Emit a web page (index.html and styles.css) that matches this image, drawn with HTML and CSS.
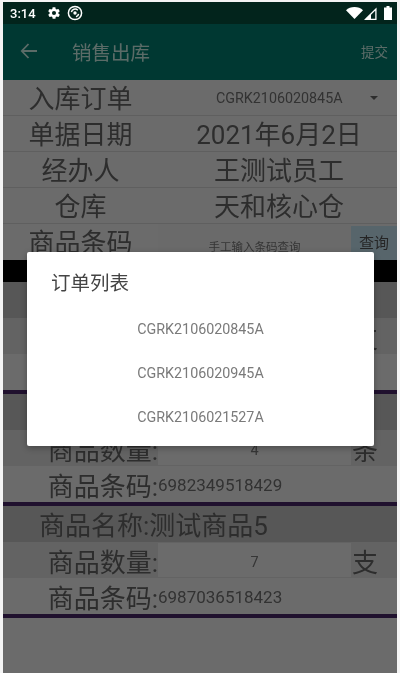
FILE: index.html
```html
<!DOCTYPE html>
<html>

<head>
    <title>销售出库</title>
    <link rel="stylesheet" href="styles.css">
</head>

<body>
    <div class="screen">
        <div class="status-bar">
            <span class="clock">3:14</span>
            <svg class="status-icon" width="14" height="14" viewBox="0 0 24 24">
                <path fill="#fff" fill-rule="evenodd" d="M19.4 13c.04-.32.1-.66.1-1s-.06-.68-.1-1l2.1-1.6c.2-.15.25-.42.12-.64l-2-3.46c-.12-.22-.38-.3-.6-.22l-2.5 1c-.52-.4-1.08-.73-1.7-.98l-.37-2.65A.5.5 0 0 0 14 2h-4a.5.5 0 0 0-.5.42l-.37 2.65c-.62.25-1.18.58-1.7.98l-2.5-1c-.22-.08-.48 0-.6.22l-2 3.46c-.13.22-.07.49.12.64L4.6 11c-.04.32-.1.66-.1 1s.06.68.1 1l-2.1 1.6c-.2.15-.25.42-.12.64l2 3.46c.12.22.38.3.6.22l2.5-1c.52.4 1.08.73 1.7.98l.37 2.65c.04.24.25.42.5.42h4c.25 0 .46-.18.5-.42l.37-2.65c.62-.25 1.18-.58 1.7-.98l2.5 1c.22.08.48 0 .6-.22l2-3.46c.13-.22.07-.49-.12-.64zM12 15.5a3.5 3.5 0 1 1 0-7 3.5 3.5 0 0 1 0 7z" />
            </svg>
            <svg class="status-icon sync" width="16" height="16" viewBox="0 0 16 16">
                <circle cx="8" cy="8" r="6.6" fill="none" stroke="#fff" stroke-width="1.5" />
                <path fill="none" stroke="#fff" stroke-width="1.5" d="M4.4 7.2a3.8 3.8 0 0 1 6.4-2M11.6 8.8a3.8 3.8 0 0 1-2.6 3" />
                <circle cx="8" cy="8" r="1.7" fill="#fff" />
            </svg>
            <span class="status-right">
                <svg width="17" height="12" viewBox="0 0 17 12">
                    <path fill="#fff" d="M0 3.2C2.2 1.2 5.2 0 8.5 0s6.3 1.2 8.5 3.2L8.5 12z" />
                </svg>
                <svg width="13" height="13" viewBox="0 0 13 13">
                    <path fill="none" stroke="#fff" stroke-width="1.3" d="M1.6 12.3 11.9 2v10.3z" />
                    <path fill="#fff" d="M1 13 7 7v6z" />
                </svg>
                <svg class="battery" width="8" height="14" viewBox="0 0 8 14">
                    <path fill="#fff" d="M2.5 0h3v1.5H8V14H0V1.5h2.5z" />
                </svg>
            </span>
        </div>

        <div class="app">
            <div class="toolbar">
                <svg class="back" width="18" height="16" viewBox="0 0 18 16">
                    <path fill="none" stroke="#d8fff5" stroke-width="1.8" d="M17 8H2M8.5 1 1.8 8l6.7 7" />
                </svg>
                <span class="toolbar-title">销售出库</span>
                <span class="toolbar-action">提交</span>
            </div>

            <div class="form-row">
                <div class="form-label">入库订单</div>
                <div class="spinner">
                    <span class="spinner-text">CGRK2106020845A</span>
                    <span class="spinner-arrow"></span>
                </div>
            </div>
            <div class="form-row">
                <div class="form-label">单据日期</div>
                <div class="form-value">2021年6月2日</div>
            </div>
            <div class="form-row">
                <div class="form-label">经办人</div>
                <div class="form-value">王测试员工</div>
            </div>
            <div class="form-row">
                <div class="form-label">仓库</div>
                <div class="form-value">天和核心仓</div>
            </div>
            <div class="form-row search-row">
                <div class="form-label">商品条码</div>
                <div class="search-input">手工输入条码查询</div>
                <div class="search-btn">查询</div>
            </div>

            <div class="black-bar"></div>

            <div class="item">
                <div class="item-name"></div>
                <div class="item-row qty-row">
                    <div class="item-label"></div>
                    <div class="qty"></div>
                    <div class="unit">支</div>
                </div>
                <div class="item-row"></div>
            </div>
            <div class="item">
                <div class="item-name"></div>
                <div class="item-row qty-row">
                    <div class="item-label">商品数量:</div>
                    <div class="qty">4</div>
                    <div class="unit">条</div>
                </div>
                <div class="item-row">
                    <div class="item-label">商品条码:</div>
                    <div class="barcode">6982349518429</div>
                </div>
            </div>
            <div class="item">
                <div class="item-name">商品名称:测试商品5</div>
                <div class="item-row qty-row">
                    <div class="item-label">商品数量:</div>
                    <div class="qty">7</div>
                    <div class="unit">支</div>
                </div>
                <div class="item-row">
                    <div class="item-label">商品条码:</div>
                    <div class="barcode">6987036518423</div>
                </div>
            </div>

            <div class="scrim"></div>

            <div class="dialog">
                <div class="dialog-title">订单列表</div>
                <div class="dialog-item">CGRK2106020845A</div>
                <div class="dialog-item">CGRK2106020945A</div>
                <div class="dialog-item">CGRK2106021527A</div>
            </div>
        </div>
    </div>
</body>

</html>
```

FILE: styles.css
```css
* {
    box-sizing: border-box;
}

html,
body {
    height: 100%;
}

body {
    margin: 0;
    padding: 2px 3px 0;
    background: #f4f4f4;
    font-family: Roboto, "Noto Sans CJK SC", sans-serif;
    color: #6c6c6c;
    overflow: hidden;
}

/* the reference is a soft video frame */
.screen {
    height: 100%;
    display: flex;
    flex-direction: column;
    background: #fff;
    filter: blur(0.5px);
}

.status-bar {
    height: 22px;
    flex-shrink: 0;
    display: flex;
    align-items: center;
    padding: 0 5px 0 7px;
    background: #02241c;
    color: #fff;
}

.clock {
    font-size: 13px;
    font-weight: 500;
    margin-right: 11px;
}

.status-icon {
    margin-right: 7px;
}

.sync {
    margin-left: -1px;
}

.status-right {
    margin-left: auto;
    display: flex;
    align-items: center;
    gap: 1px;
}

.battery {
    margin-left: 6px;
}

.app {
    position: relative;
    flex: 1;
    overflow: hidden;
}

.toolbar {
    height: 56px;
    display: flex;
    align-items: center;
    padding: 0 9px 2px 17px;
    background: #008577;
    color: #d8fff5;
}

.back {
    margin-right: 34px;
}

.toolbar-title {
    font-size: 19.5px;
}

.toolbar-action {
    margin-left: auto;
    font-size: 13.5px;
}

.form-row {
    height: 36px;
    display: flex;
    align-items: center;
    padding-bottom: 3px;
    border-bottom: 1px solid #e2e2e2;
    font-size: 26px;
    white-space: nowrap;
}

.form-label {
    width: 155px;
    text-align: center;
}

.form-value {
    flex: 1;
    text-align: center;
    padding-left: 3px;
}

.spinner {
    flex: 1;
    display: flex;
    align-items: center;
    padding: 3px 0 0 58px;
}

.spinner-text {
    font-size: 14.3px;
    color: #787878;
}

.spinner-arrow {
    margin-left: 27px;
    border-left: 4px solid transparent;
    border-right: 4px solid transparent;
    border-top: 4px solid #6c6c6c;
}

.search-row {
    padding-bottom: 0;
    border-bottom: 0;
    align-items: stretch;
}

.search-row .form-label {
    line-height: 38px;
}

.search-input {
    flex: 1;
    padding-top: 5px;
    text-align: center;
    font-size: 11.5px;
    line-height: 36px;
    color: #7e7e7e;
    background: #fdfdfd;
}

.search-btn {
    width: 46px;
    margin-top: 2px;
    background: #d0f0ff;
    color: #5a5a5a;
    font-size: 15px;
    line-height: 34px;
    text-align: center;
}

.black-bar {
    height: 22px;
    background: #000;
}

.item {
    border-bottom: 4.5px solid #4e2a6e;
    white-space: nowrap;
}

.item-name {
    height: 36px;
    line-height: 40px;
    padding-left: 36px;
    font-size: 26px;
    background: #cfcfcf;
}

.item-row {
    height: 36px;
    display: flex;
    align-items: center;
    font-size: 26px;
}

.qty-row {
    background: #ededed;
}

.item-label {
    width: 155px;
    text-align: right;
}

.qty {
    width: 193px;
    height: 34px;
    line-height: 40px;
    text-align: center;
    font-size: 14.5px;
    color: #808080;
    background: #fff;
}

.unit {
    margin-left: 1px;
}

.barcode {
    padding-top: 2px;
    font-size: 17px;
    color: #787878;
}

.scrim {
    position: absolute;
    inset: 0;
    background: rgba(0, 0, 0, 0.58);
}

.dialog {
    position: absolute;
    top: 228px;
    left: 24px;
    width: 347px;
    height: 194px;
    padding-bottom: 8px;
    background: #fff;
    border-radius: 2px;
    box-shadow: 0 2px 6px rgba(0, 0, 0, 0.3);
}

.dialog-title {
    height: 55px;
    padding: 18px 0 0 24px;
    font-size: 19.5px;
    line-height: 28px;
    color: #444;
}

.dialog-item {
    height: 44px;
    line-height: 44px;
    text-align: center;
    font-size: 14.3px;
    color: #7a7a7a;
}
```
